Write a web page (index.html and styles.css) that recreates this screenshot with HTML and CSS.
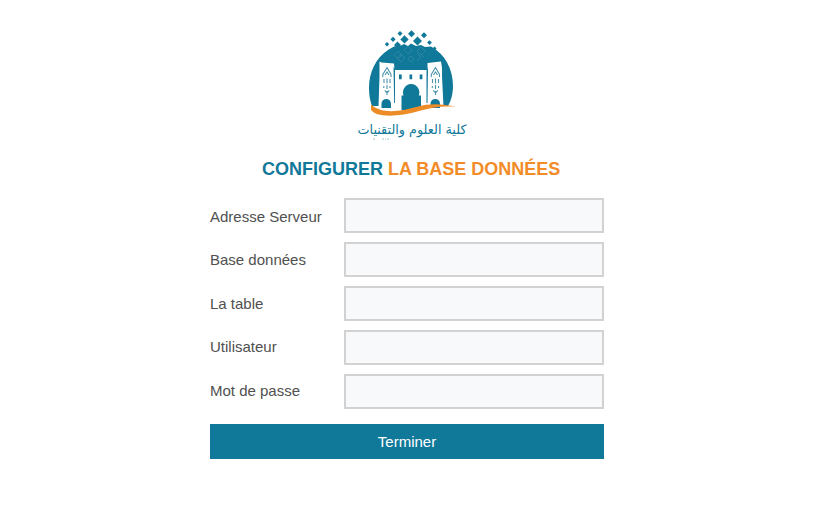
FILE: index.html
```html
<!DOCTYPE html>
<html lang="fr">
<head>
<meta charset="utf-8">
<title>Configurer la base données</title>
<link rel="stylesheet" href="styles.css">
</head>
<body>
<main class="setup">
  <svg class="logo" viewBox="350 25 120 120" role="img">
    <path class="blue" d="M388 50L394 46.500L401 45.500L404 44L408 46L411 43.500L416 46L421 45L425 47L431 46.500C445 54 453 69 453 86C453 94 451 101 448 106L372 106C370 101 369 95 369 88C369 72 376 58 388 50Z"/>
    <path class="blue" d="M400 31l2.500 2.500-2.500 2.500-2.500-2.500zM411.500 30.300l3.500 3.500-3.500 3.500-3.500-3.500zM424 32.300l3 3-3 3-3-3zM393 36.700l2.600 2.600-2.600 2.600-2.600-2.600zM404.500 35.200l4.200 4.200-4.200 4.200-4.200-4.200zM417.500 36.500l4.500 4.500-4.500 4.500-4.500-4.500zM387 42l2.200 2.200-2.200 2.200-2.200-2.200zM397.500 41.500l3.500 3.500-3.500 3.500-3.500-3.500zM429.500 40.200l2.400 2.400-2.400 2.400-2.400-2.400zM434.500 46.500l2.100 2.100-2.100 2.100-2.100-2.100z"/>
    <path class="tracery" d="M398 51l4 4-4 4-4-4zM408 46l4 4-4 4-4-4zM421 47l4 4-4 4-4-4zM401 54l4 4-4 4-4-4zM411 56l3 3-3 3-3-3zM417 53l4 4-4 4M424 57l-3-3"/>
    <path class="white" d="M379.500 61.500L381.500 62.500L394 63.500L394.500 70H427.500V63L441 61.500L442 68V76L443.500 107H378.500L379.500 76Z"/>
    <path class="blue" d="M393.500 67L395 69V103H394.200ZM428 67L426.500 71V103H427.500ZM399 74.500h2.700v4.700h-2.700zM409.500 74.500h2.700v4.700h-2.700zM419.700 74.500h2.700v4.700h-2.700z"/>
    <path class="blue" d="M401.500 110V95.500H403.500C401.500 90 405.500 84 411 84C417 84 421 90 418.800 95.500H421V110ZM381.500 108V103.700A4.700 4.700 0 0 1 391 103.700V108ZM430.500 108V103.700A4.700 4.700 0 0 1 440 103.700V108Z"/>
    <g class="ornament">
      <path id="tower-detail" d="M382.800 77V74.500L387 67.500L391 74.500V77M385 75l2-3 2 3M384 79v4M387 78.500v5M390 79v4M383.800 86v2M390 86v2M387 85v4M384.800 90.500l2.200 2.200 2.200-2.200M387 91v4"/>
      <use href="#tower-detail" x="48.500"/>
    </g>
    <path class="ribbon" d="M371 104.500C383 115 401 111 416 107C431 103 443 104 456 107C442 105.500 431 108 419 111C399 117 375 118 371 109.500Z"/>
    <text class="faculty" x="412" y="134" textLength="109" lengthAdjust="spacingAndGlyphs" direction="rtl" lang="ar">كلية العلوم والتقنيات</text>
    <path class="dots" d="M373 139h2M382 139h2M385 139h1M387 139h2"/>
  </svg>

  <h1>CONFIGURER <span>LA BASE DONNÉES</span></h1>

  <form>
    <div class="labels">
      <label for="server">Adresse Serveur</label>
      <label for="database">Base données</label>
      <label for="table">La table</label>
      <label for="user">Utilisateur</label>
      <label for="password">Mot de passe</label>
    </div>
    <div class="fields">
      <input id="server" type="text">
      <input id="database" type="text">
      <input id="table" type="text">
      <input id="user" type="text">
      <input id="password" type="password">
    </div>
    <button type="button">Terminer</button>
  </form>
</main>
</body>
</html>
```

FILE: styles.css
```css
* { box-sizing: border-box; }

body {
  margin: 0;
  background: #fff;
  color: #505050;
  font: 15px "Liberation Sans", Arial, sans-serif;
}

.setup {
  width: 394px;
  margin-left: 210px;
  padding-top: 25px;
}

.logo {
  display: block;
  width: 120px;
  height: 120px;
  margin-left: 140px;
  overflow: visible;
}

.blue { fill: #107899; }
.white { fill: #fff; }
.ribbon { fill: #ed8b26; }
.tracery { fill: none; stroke: #3e91ab; stroke-width: .6; }
.ornament { fill: none; stroke: #4b96ae; stroke-width: 1.1; }
.dots { fill: none; stroke: #9cc6d3; stroke-width: 1; }

.faculty {
  fill: #107899;
  font: 13px "DejaVu Sans", sans-serif;
  text-anchor: middle;
}

h1 {
  width: 298px;
  margin: 12px 0 0 52px;
  color: #107899;
  font-size: 18px;
  line-height: 24px;
  white-space: nowrap;
}

h1 span { color: #f28c28; }

form {
  display: grid;
  grid-template-columns: 134px 260px;
  grid-template-rows: 211px 35px;
  row-gap: 15px;
  margin-top: 17px;
}

.labels {
  display: flex;
  flex-direction: column;
  padding-top: .8px;
}

label {
  flex: none;
  height: 43.5px;
  line-height: 35px;
}

.fields {
  display: grid;
  grid-auto-rows: 35px;
  row-gap: 9px;
}

input {
  width: 100%;
  margin: 0;
  padding: 0 8px;
  border: 2px solid #d2d2d2;
  border-radius: 0;
  background: #f8f9fb;
  font: inherit;
}

button {
  grid-column: 1 / -1;
  padding: 0;
  border: 0;
  background: #107899;
  color: #fff;
  font: inherit;
}
```
